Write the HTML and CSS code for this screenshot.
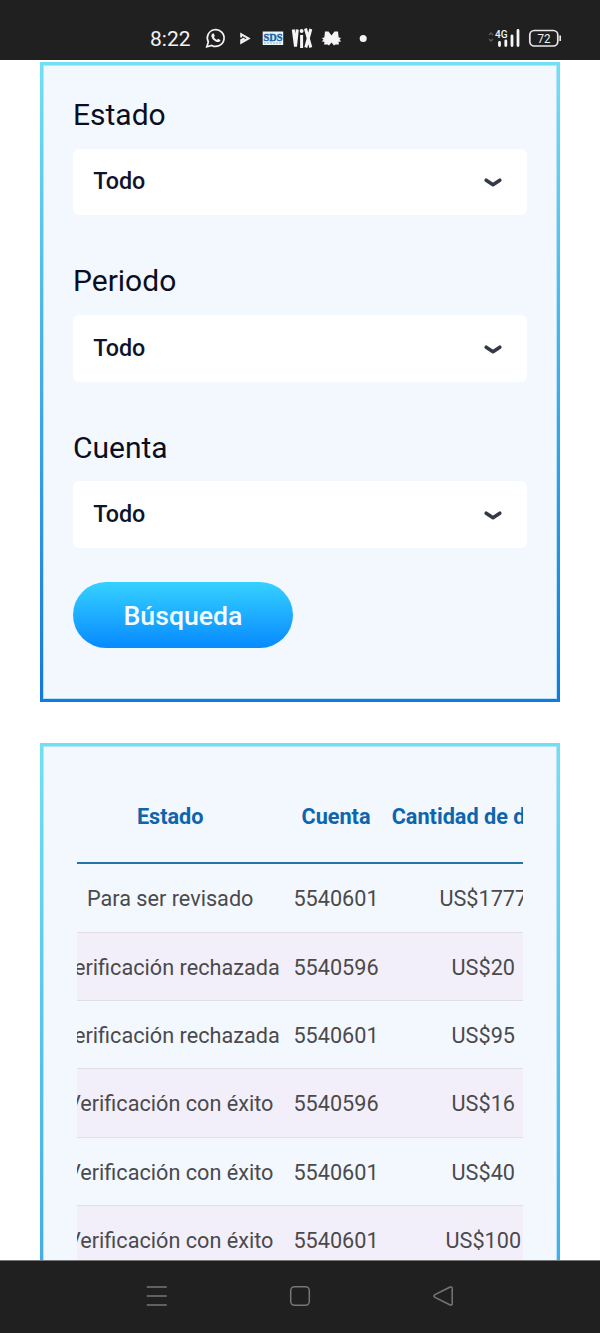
FILE: index.html
```html
<!DOCTYPE html>
<html lang="es">
<head>
<meta charset="utf-8">
<title>Historial</title>
<link rel="stylesheet" href="styles.css">
</head>
<body>
<div class="phone">
  <header class="status">
    <span class="clock">8:22</span>
    <svg class="status-icons" width="170" height="24" viewBox="0 0 170 24">
      <path d="M2.300 20.700 3.800 16A8.400 8.400 0 1 1 7.200 19.400z" transform="translate(.5 0)" fill="none" stroke="#f2f2f2" stroke-width="1.700"/>
      <path fill="#f2f2f2" d="M8.600 7.600 9.800 7.500l1 2.500-.9 1.100c.7 1.400 1.700 2.200 3 2.800l1.100-1.200 2.400 1.200c.1 1.400-1.100 2.100-2.200 2.200-3.400-.3-6.500-3.300-6.800-6.200 0-.9.500-1.900 1.200-2.300z"/>
      <path fill="none" stroke="#f2f2f2" stroke-width="2" d="M37.200 11.500V8.200l7.400 4.200-7.400 4.300v-2.500l3.300-1.800"/>
      <rect x="58.700" y="5.500" width="20.500" height="13.500" fill="#e9f2f5"/>
      <text class="sds" x="59.500" y="15" textLength="19" lengthAdjust="spacingAndGlyphs">SDS</text>
      <path d="M60 17h18" stroke="#94aebe" stroke-dasharray="2 1"/>
      <path d="M89.300 3.500 91.500 20.500l1.800-17M97.600 9v13M101.500 2.500l5.300 19M106.800 3l-5 18.500" fill="none" stroke="#f5f5f5" stroke-width="3"/>
      <circle cx="97.600" cy="5" r="1.900" fill="#f5f5f5"/>
      <path fill="#f5f5f5" d="M121 5.500h3.500l3 4 3-4h3.500l.7 6 2.500.5-1.700 1.500 1.700 2-2.700.3.500 2.700h-3.500l-1.500 1-2.500-3-2.500 3-1.500-1H120l.5-2.700-2.700-.3 1.700-2-1.700-1.500 2.500-.5z"/>
      <circle cx="159.200" cy="12.500" r="3.500" fill="#f5f5f5"/>
    </svg>
    <svg class="signal" width="76" height="24" viewBox="0 0 76 24">
      <path d="m2 9 2-2 2 2M2 13l2 2 2-2" fill="none" stroke="#5a5a5a" stroke-width="1.300"/>
      <path d="M12.500 16.500v3M18.800 15v4.500M25 10v9.500M31 4.500v15" stroke="#f5f5f5" stroke-width="2.800" stroke-linecap="round"/>
      <text class="net" x="8" y="12" textLength="12.500" lengthAdjust="spacingAndGlyphs">4G</text>
      <rect x="42.800" y="4.500" width="28" height="15.500" rx="4.500" fill="none" stroke="#e8e8e8" stroke-width="1.700"/>
      <path d="M73.200 9.500v5.500" stroke="#e8e8e8" stroke-width="1.700"/>
      <text class="level" x="50.500" y="16.500" textLength="13" lengthAdjust="spacingAndGlyphs">72</text>
    </svg>
  </header>

  <main class="content">
    <section class="card filters">
      <div class="card-body">
        <label class="label">Estado</label>
        <div class="select"><span>Todo</span><svg width="18" height="10" viewBox="0 0 18 10"><path d="M2.200 2.200 9 6.800l6.800-4.600"/></svg></div>
        <label class="label">Periodo</label>
        <div class="select"><span>Todo</span><svg width="18" height="10" viewBox="0 0 18 10"><path d="M2.200 2.200 9 6.800l6.800-4.600"/></svg></div>
        <label class="label">Cuenta</label>
        <div class="select last"><span>Todo</span><svg width="18" height="10" viewBox="0 0 18 10"><path d="M2.200 2.200 9 6.800l6.800-4.600"/></svg></div>
        <button class="search">Búsqueda</button>
      </div>
    </section>

    <section class="card results">
      <div class="card-body">
        <div class="scroller">
          <div class="table">
            <div class="row head"><span>Estado</span><span>Cuenta</span><span>Cantidad de dinero</span></div>
            <div class="row"><span>Para ser revisado</span><span>5540601</span><span>US$1777</span></div>
            <div class="row"><span>Verificación rechazada</span><span>5540596</span><span>US$20</span></div>
            <div class="row"><span>Verificación rechazada</span><span>5540601</span><span>US$95</span></div>
            <div class="row"><span>Verificación con éxito</span><span>5540596</span><span>US$16</span></div>
            <div class="row"><span>Verificación con éxito</span><span>5540601</span><span>US$40</span></div>
            <div class="row"><span>Verificación con éxito</span><span>5540601</span><span>US$100</span></div>
          </div>
        </div>
      </div>
    </section>
  </main>

  <nav class="nav">
    <svg width="22" height="22" viewBox="0 0 22 22"><path d="M.8 2h20M.8 11h20M.8 20h20"/></svg>
    <svg width="22" height="22" viewBox="0 0 22 22"><rect x="1.700" y="1.700" width="18.600" height="18.600" rx="4"/></svg>
    <svg width="22" height="22" viewBox="0 0 22 22"><path d="M18.200 2 3 9.600q-2.200 1.400 0 2.800L18.200 20q2 .5 2-1.500v-15Q20.200 1.500 18.200 2z"/></svg>
  </nav>
</div>
</body>
</html>
```

FILE: styles.css
```css
* { box-sizing: border-box; }
body { margin: 0; font-family: Roboto, sans-serif; background: #fff; }
.phone { width: 600px; height: 1333px; display: flex; flex-direction: column; overflow: hidden; }

.status { height: 60px; flex: none; background: #202020; display: flex; align-items: center; padding: 16px 37px 0 150px; color: #f2f2f2; }
.clock { font-size: 21px; width: 54px; line-height: 44px; padding-top: 1px; }
.status-icons { flex: none; }
.signal { margin-left: auto; }
.sds { font: bold 11px "Liberation Serif", serif; fill: #1c62a5; stroke: #1c62a5; stroke-width: .4px; }
.net { font: 500 11.5px Roboto, sans-serif; fill: #f5f5f5; stroke: #202020; stroke-width: 2px; paint-order: stroke; }
.level { font: 12px Roboto, sans-serif; fill: #f0f0f0; }

.content { height: 1200px; flex: none; overflow: hidden; padding: 2px 40px 0; }
.card { padding: 3px; background: linear-gradient(#72e0f3, #1478dd); }
.card-body { height: 100%; background: #f3f8ff; border: 1px solid #b4e4f8; }
.filters { height: 640px; }
.filters .card-body { padding: 29px 29px 0; display: flex; flex-direction: column; align-items: stretch; }
.label { font-size: 30px; line-height: 40px; height: 53.67px; color: #0b0e20; }
.select { height: 66.67px; margin-bottom: 46.1px; flex: none; background: #fff; border-radius: 6px; padding: 0 25px 0 20.3px; display: flex; align-items: center; justify-content: space-between; font-size: 23.33px; font-weight: 500; color: #10142b; }
.select span { margin-top: -1px; letter-spacing: -.1px; }
.select svg { fill: none; stroke: #343947; stroke-width: 3.5px; stroke-linecap: round; stroke-linejoin: round; margin-top: 3px; }
.select.last { margin-bottom: 33.6px; }
.search { width: 220px; height: 66.67px; flex: none; border: 0; border-radius: 34px; padding: 1px 0 0; background: linear-gradient(#36d1ff, #078aff); color: #f5fcff; font: 500 26.67px Roboto, sans-serif; }

.results { height: 1060px; margin-top: 41.33px; }
.results .card-body { padding: 22px 33px 0; }
.scroller { overflow: hidden; }
.table { width: 528px; margin-left: -23.3px; }
.row { display: grid; grid-template-columns: 233px 98.6px 196px; align-items: center; text-align: center; height: 68.33px; font-size: 21.67px; color: #4a4a4d; border-bottom: 1.5px solid #e0dfe8; white-space: nowrap; }
.row span { line-height: 30px; padding-top: 3px; }
.row:nth-child(odd):not(.head) { background: #f3effa; }
.head { height: 95px; font-weight: 700; color: #0c65ad; border-bottom: 2px solid #2375a7; }
.head span { padding-top: 1.5px; }

.nav { height: 73px; flex: none; background: #202020; border-top: 1px solid #777; display: flex; justify-content: space-between; padding: 24px 146px 0; }
.nav svg { fill: none; stroke: #777; stroke-width: 1.5px; }
```
